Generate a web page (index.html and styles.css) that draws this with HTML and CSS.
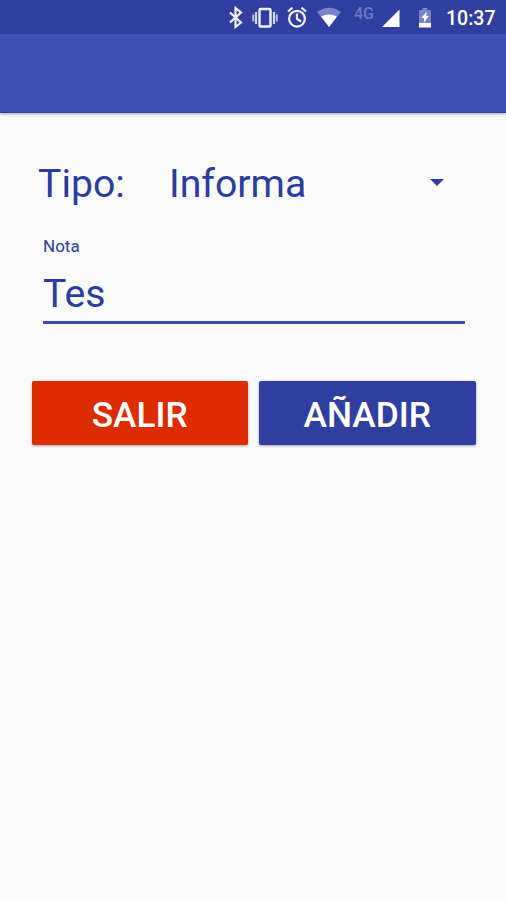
FILE: index.html
```html
<!DOCTYPE html>
<html lang="es">
<head>
<meta charset="utf-8">
<title>Nota</title>
<link rel="stylesheet" href="styles.css">
</head>
<body>
<header class="header">
  <div class="status">
    <svg class="icons" viewBox="0 0 220 34" aria-hidden="true">
      <path d="M10 12.500l11 10-5.500 4.500V8l5.500 4.500-11 10" fill="none" stroke="#f3f5ff" stroke-width="2.200"/>
      <g fill="none" stroke="#eef1ff">
        <rect x="39.500" y="9" width="11" height="17.500" rx="1" stroke-width="2.400"/>
        <path d="M36 12v12M54 12v12" stroke-width="2.200" opacity=".85"/>
        <path d="M33.200 14.500v7M56.800 14.500v7" stroke-width="2" opacity=".7"/>
      </g>
      <g fill="none" stroke="#eef1ff" stroke-width="2.200">
        <circle cx="77" cy="18.700" r="7.900"/>
        <path d="M77 13.500v5.500l4 2.500M68 11.500l4.500-3.800M86 11.500l-4.500-3.800"/>
      </g>
      <path d="M97 12Q109 3.500 121 12L109 27z" fill="#7983ca"/>
      <path d="M101 16.500Q109 12.500 117 16.500L109 27z" fill="#fff"/>
      <path d="M162 27h17.500V9.500z" fill="#fff"/>
      <path d="M199 10h3.500V8h5v2h3.500v13h-12z" fill="#7983ca"/>
      <path d="M199 23h12v4.500h-12zM206.500 11.500l-5 6.500h2.500v4.500l5-6.500h-2.500z" fill="#fff"/>
      <text class="network" x="134" y="18.500">4G</text>
    </svg>
    <span class="clock">10:37</span>
  </div>
</header>
<main class="form">
  <div class="row">
    <span class="label">Tipo:</span>
    <div class="select"><span>Informa</span><svg class="arrow" viewBox="0 0 14 7" aria-hidden="true"><path d="M0 0h14L7 7z" fill="#303f9f"/></svg></div>
  </div>
  <div class="field">
    <div class="hint">Nota</div>
    <div class="value">Tes</div>
  </div>
  <div class="actions">
    <button class="btn exit">SALIR</button>
    <button class="btn add">AÑADIR</button>
  </div>
</main>
</body>
</html>
```
FILE: styles.css
```css
* { box-sizing: border-box; }
body {
  margin: 0;
  height: 900px;
  background: #fafafa;
  color: #2b3ca0;
  font-family: Roboto, sans-serif;
}
.header {
  height: 113px;
  background: #3f51b5;
  border-bottom: 1px solid #303f9f;
  box-shadow: 0 1px 3px rgba(0, 0, 0, .35);
}
.status {
  display: flex;
  height: 34px;
  padding-left: 220px;
  background: #303f9f;
}
.icons { width: 220px; height: 34px; flex: none; }
.network { font-size: 16px; font-weight: 500; fill: #6d78c2; }
.clock {
  padding: 1px 0 0 6px;
  color: #fff;
  font-size: 19.500px;
  font-weight: 500;
  line-height: 35px;
}
.form { padding: 47px 30px 0 38px; }
.row {
  display: flex;
  height: 48px;
  font-size: 39.200px;
  line-height: 48px;
}
.label { width: 131px; }
.select {
  display: flex;
  flex: 1;
  justify-content: space-between;
  align-items: center;
  padding-right: 32px;
}
.arrow { width: 14px; height: 7px; margin-top: -3px; }
.field {
  width: 422px;
  height: 88px;
  margin: 28px 0 0 5px;
  border-bottom: 3px solid #3c4ba6;
}
.hint { height: 20px; font-size: 17px; line-height: 20px; }
.value { margin-top: 14px; height: 48px; font-size: 39.200px; line-height: 48px; }
.actions {
  display: flex;
  gap: 11px;
  margin: 57px 0 0 -6.500px;
}
.btn {
  width: 216.500px;
  height: 64px;
  padding: 4px 0 0;
  border: 0;
  border-radius: 2px;
  color: #fff;
  font: 500 35.300px/60px Roboto, sans-serif;
  box-shadow: 0 1px 3px rgba(0, 0, 0, .35);
}
.exit { background: #dd2c00; }
.add { background: #303f9f; }
```
